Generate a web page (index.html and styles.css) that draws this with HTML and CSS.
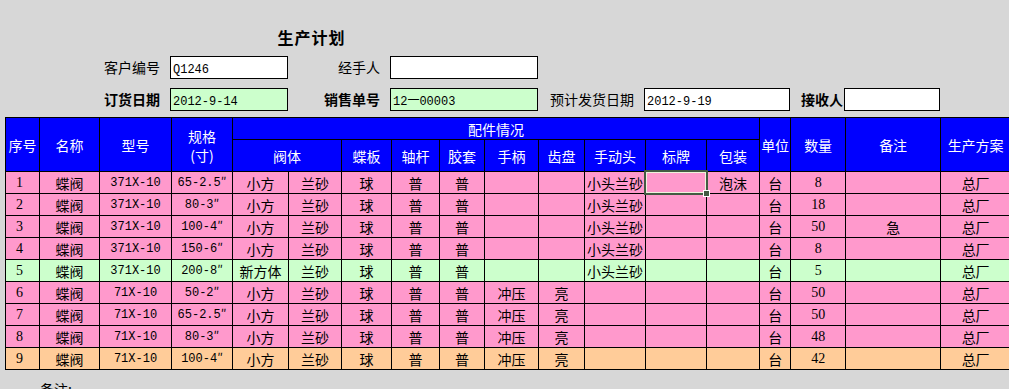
FILE: index.html
```html
<!DOCTYPE html>
<html lang="zh-CN">
<head>
<meta charset="utf-8">
<title>生产计划</title>
<link rel="stylesheet" href="styles.css">
</head>
<body>
<div class="sheet">
  <div class="form">
    <div class="title">生产计划</div>

    <div class="lbl r2 g2-4">客户编号</div>
    <div class="box r2 g4-6"><span class="mono">Q1246</span></div>
    <div class="lbl r2 g6-8">经手人</div>
    <div class="box r2 g8-11"></div>

    <div class="lbl b r3 g2-4">订货日期</div>
    <div class="box green r3 g4-6"><span class="mono">2012-9-14</span></div>
    <div class="lbl b r3 g6-8">销售单号</div>
    <div class="box green r3 g8-11"><span class="mono">12一00003</span></div>
    <div class="lbl r3 g11-13">预计发货日期</div>
    <div class="box r3 g13-16"><span class="mono">2012-9-19</span></div>
    <div class="lbl b tight r3 g16-17">接收人</div>
    <div class="box r3 g17-18"></div>
  </div>

  <table class="grid">
    <colgroup>
      <col class="w34"><col class="w60"><col class="w72"><col class="w61">
      <col class="w56"><col class="w53"><col class="w50"><col class="w48">
      <col class="w45"><col class="w54"><col class="w46"><col class="w61">
      <col class="w61"><col class="w53"><col class="w31"><col class="w55">
      <col class="w95"><col class="w70">
    </colgroup>
    <thead>
      <tr class="h1">
        <th rowspan="2">序号</th>
        <th rowspan="2">名称</th>
        <th rowspan="2">型号</th>
        <th rowspan="2" class="two">规格<br>(寸)</th>
        <th colspan="10">配件情况</th>
        <th rowspan="2">单位</th>
        <th rowspan="2">数量</th>
        <th rowspan="2">备注</th>
        <th rowspan="2">生产方案</th>
      </tr>
      <tr class="h2">
        <th colspan="2">阀体</th>
        <th>蝶板</th>
        <th>轴杆</th>
        <th>胶套</th>
        <th>手柄</th>
        <th>齿盘</th>
        <th>手动头</th>
        <th>标牌</th>
        <th>包装</th>
      </tr>
    </thead>
    <tbody>
      <tr class="pink">
        <td class="idx">1</td><td>蝶阀</td><td class="mono">371X-10</td><td class="mono">65-2.5<span class="prime">″</span></td>
        <td>小方</td><td>兰砂</td><td>球</td><td>普</td><td>普</td><td></td><td></td>
        <td>小头兰砂</td><td class="sel"><div class="sel-box"></div><div class="handle"></div></td><td>泡沫</td>
        <td>台</td><td class="qty">8</td><td></td><td>总厂</td>
      </tr>
      <tr class="pink">
        <td class="idx">2</td><td>蝶阀</td><td class="mono">371X-10</td><td class="mono">80-3<span class="prime">″</span></td>
        <td>小方</td><td>兰砂</td><td>球</td><td>普</td><td>普</td><td></td><td></td>
        <td>小头兰砂</td><td></td><td></td>
        <td>台</td><td class="qty">18</td><td></td><td>总厂</td>
      </tr>
      <tr class="pink">
        <td class="idx">3</td><td>蝶阀</td><td class="mono">371X-10</td><td class="mono">100-4<span class="prime">″</span></td>
        <td>小方</td><td>兰砂</td><td>球</td><td>普</td><td>普</td><td></td><td></td>
        <td>小头兰砂</td><td></td><td></td>
        <td>台</td><td class="qty">50</td><td>急</td><td>总厂</td>
      </tr>
      <tr class="pink">
        <td class="idx">4</td><td>蝶阀</td><td class="mono">371X-10</td><td class="mono">150-6<span class="prime">″</span></td>
        <td>小方</td><td>兰砂</td><td>球</td><td>普</td><td>普</td><td></td><td></td>
        <td>小头兰砂</td><td></td><td></td>
        <td>台</td><td class="qty">8</td><td></td><td>总厂</td>
      </tr>
      <tr class="green">
        <td class="idx">5</td><td>蝶阀</td><td class="mono">371X-10</td><td class="mono">200-8<span class="prime">″</span></td>
        <td>新方体</td><td>兰砂</td><td>球</td><td>普</td><td>普</td><td></td><td></td>
        <td>小头兰砂</td><td></td><td></td>
        <td>台</td><td class="qty">5</td><td></td><td>总厂</td>
      </tr>
      <tr class="pink">
        <td class="idx">6</td><td>蝶阀</td><td class="mono">71X-10</td><td class="mono">50-2<span class="prime">″</span></td>
        <td>小方</td><td>兰砂</td><td>球</td><td>普</td><td>普</td><td>冲压</td><td>亮</td>
        <td></td><td></td><td></td>
        <td>台</td><td class="qty">50</td><td></td><td>总厂</td>
      </tr>
      <tr class="pink">
        <td class="idx">7</td><td>蝶阀</td><td class="mono">71X-10</td><td class="mono">65-2.5<span class="prime">″</span></td>
        <td>小方</td><td>兰砂</td><td>球</td><td>普</td><td>普</td><td>冲压</td><td>亮</td>
        <td></td><td></td><td></td>
        <td>台</td><td class="qty">50</td><td></td><td>总厂</td>
      </tr>
      <tr class="pink">
        <td class="idx">8</td><td>蝶阀</td><td class="mono">71X-10</td><td class="mono">80-3<span class="prime">″</span></td>
        <td>小方</td><td>兰砂</td><td>球</td><td>普</td><td>普</td><td>冲压</td><td>亮</td>
        <td></td><td></td><td></td>
        <td>台</td><td class="qty">48</td><td></td><td>总厂</td>
      </tr>
      <tr class="orange">
        <td class="idx">9</td><td>蝶阀</td><td class="mono">71X-10</td><td class="mono">100-4<span class="prime">″</span></td>
        <td>小方</td><td>兰砂</td><td>球</td><td>普</td><td>普</td><td>冲压</td><td>亮</td>
        <td></td><td></td><td></td>
        <td>台</td><td class="qty">42</td><td></td><td>总厂</td>
      </tr>
    </tbody>
  </table>

  <div class="note">备注:</div>
</div>
</body>
</html>
```
FILE: styles.css
```css
html, body {
  margin: 0;
  padding: 0;
  overflow: hidden;
}
body {
  width: 1009px;
  height: 389px;
  background: #d7d7d7;
  color: #000;
  font-family: "Noto Sans CJK SC", sans-serif;
  font-size: 14px;
}
.sheet {
  padding-left: 5px;
}

/* ---------- top form, on the same column grid as the table ---------- */
.form {
  display: grid;
  grid-template-columns: 34px 60px 72px 61px 56px 53px 50px 48px 45px 54px 46px 61px 61px 53px 31px 55px 95px 70px;
  grid-template-rows: 52px 32px 32px;
}
.title {
  grid-column: 5 / 8;
  grid-row: 1;
  align-self: end;
  margin-bottom: 5px;
  text-align: center;
  font-size: 16px;
  font-weight: bold;
  line-height: 20px;
  letter-spacing: 1px;
}
.r2 { grid-row: 2; }
.r3 { grid-row: 3; }
.g2-4 { grid-column: 2 / 4; }
.g4-6 { grid-column: 4 / 6; }
.g6-8 { grid-column: 6 / 8; }
.g8-11 { grid-column: 8 / 11; }
.g11-13 { grid-column: 11 / 13; }
.g13-16 { grid-column: 13 / 16; }
.g16-17 { grid-column: 16 / 17; }
.g17-18 { grid-column: 17 / 18; }

.lbl {
  margin-top: 4px;
  height: 23px;
  line-height: 23px;
  padding-right: 11px;
  text-align: right;
  white-space: nowrap;
}
.lbl.b { font-weight: bold; }
.lbl.tight { padding-right: 2px; }

.box {
  margin: 4px 0 0 -1px;
  height: 23px;
  box-sizing: border-box;
  border: 1px solid #000;
  background: #fff;
  padding-left: 2px;
  line-height: 21px;
  white-space: nowrap;
  overflow: hidden;
}
.box.green { background: #ccffcc; }

.mono {
  font-family: "Liberation Mono", "Noto Sans CJK SC", monospace;
  font-size: 12px;
}
.prime {
  font-family: "Noto Sans CJK SC", sans-serif;
  font-size: 12px;
  line-height: 0;
}

/* ---------- table ---------- */
.grid {
  border-collapse: collapse;
  table-layout: fixed;
  width: 1005px;
  margin-top: 1px;
}
.w31 { width: 31px; } .w34 { width: 34px; } .w45 { width: 45px; }
.w46 { width: 46px; } .w48 { width: 48px; } .w50 { width: 50px; }
.w53 { width: 53px; } .w54 { width: 54px; } .w55 { width: 55px; }
.w56 { width: 56px; } .w60 { width: 60px; } .w61 { width: 61px; }
.w70 { width: 70px; } .w72 { width: 72px; } .w95 { width: 95px; }

.grid th,
.grid td {
  border: 1px solid #000;
  padding: 0;
  text-align: center;
  vertical-align: middle;
  white-space: nowrap;
  overflow: hidden;
  font-weight: normal;
  line-height: 20px;
}
.grid th {
  background: #0000ff;
  color: #fff;
}
.grid th.two { line-height: 19px; padding-top: 2px; }
.h1 { height: 22px; }
.h2 { height: 32px; }
.grid tbody tr { height: 22px; }

tr.pink td { background: #ff99cc; }
tr.green td { background: #ccffcc; }
tr.orange td { background: #ffcc99; }

.grid td.idx {
  text-align: left;
  padding-left: 10px;
  font-family: "Liberation Serif", serif;
}
.grid td.qty {
  font-family: "Liberation Serif", serif;
}

/* selected cell (overlay) */
.grid td.sel {
  position: relative;
  overflow: visible;
}
.sel-box {
  position: absolute;
  left: -2px;
  top: -2px;
  right: -2px;
  bottom: -2px;
  border: 2px solid #435b43;
  box-shadow: inset 0 0 0 1px #eef3dc;
}
.handle {
  position: absolute;
  right: -4px;
  bottom: -4px;
  width: 5px;
  height: 5px;
  background: #435b43;
  border: 1px solid #fff;
}

.note {
  margin-top: 9px;
  padding-left: 35px;
  line-height: 20px;
}
```
